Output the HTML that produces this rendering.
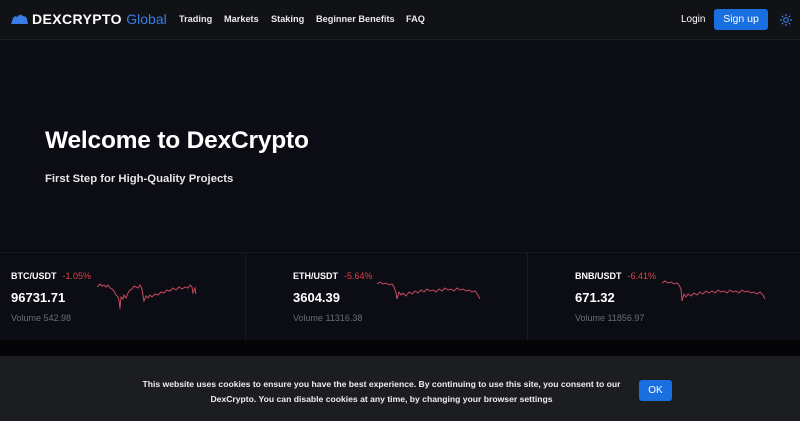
<!DOCTYPE html>
<html><head><meta charset="utf-8"><style>
*{margin:0;padding:0;box-sizing:border-box}
body{width:800px;height:421px;overflow:hidden;background:#0b0c14;font-family:"Liberation Sans",sans-serif;color:#fff;position:relative}
.hdr{position:absolute;left:0;top:0;width:800px;height:40px;background:#111215;border-bottom:1px solid #1e2026}
.logo{position:absolute;left:11px;top:11px;font-size:14px;font-weight:bold;letter-spacing:0.4px}
.logo .g{color:#3a7be8;font-weight:normal;letter-spacing:0}
.nav{position:absolute;top:14px;font-size:9.2px;font-weight:bold;color:#e8e8e8}
.btn{position:absolute;left:714px;top:9px;width:54px;height:21px;background:#1a6fe0;border-radius:3px;font-size:10.5px;text-align:center;line-height:21px}
h1{position:absolute;left:45px;top:127px;font-size:24.5px;font-weight:bold;letter-spacing:-0.2px}
.sub{position:absolute;left:45px;top:173px;font-size:11.3px;font-weight:bold;color:#e6e6e6}
.row{position:absolute;left:0;top:252px;width:800px;height:88px;border-top:1px solid #15171f}
.sep{position:absolute;top:0;width:1px;height:88px;background:#181a22}
.pair{position:absolute;top:18px;font-size:9px;font-weight:bold}
.pair span{color:#e0424c;font-weight:normal;margin-left:6px}
.price{position:absolute;top:37px;font-size:13px;font-weight:bold}
.vol{position:absolute;top:60px;font-size:9px;color:#6c6e76}
.dark{position:absolute;left:0;top:340px;width:800px;height:16px;background:#050507}
.ck{position:absolute;left:0;top:356px;width:800px;height:65px;background:#1c1d21}
.ct{position:absolute;left:120px;top:21px;width:523px;text-align:center;font-size:8.6px;line-height:15px;font-weight:bold;color:#eee}
.ok{position:absolute;left:639px;top:24px;width:33px;height:21px;background:#1a6fe0;border-radius:3px;font-size:10px;text-align:center;line-height:21px}
</style></head><body>
<div class="hdr">
<svg style="position:absolute;left:11px;top:14px" width="17" height="10" viewBox="0 0 17 10"><path d="M0 10 L2 4 Q4 1 6 3 Q9 -1 12 2 Q15 2 16 5 L17 10Z" fill="#3a7be8"/></svg>
<div class="logo" style="left:32px">DEXCRYPTO <span class="g">Global</span></div>
<div class="nav" style="left:179px">Trading</div>
<div class="nav" style="left:224px">Markets</div>
<div class="nav" style="left:271px">Staking</div>
<div class="nav" style="left:316px">Beginner Benefits</div>
<div class="nav" style="left:406px">FAQ</div>
<div class="nav" style="left:681px;font-weight:normal;color:#fff;font-size:10px">Login</div>
<div class="btn">Sign up</div>
<svg style="position:absolute;left:780px;top:14px" width="12" height="12" viewBox="0 0 12 12" stroke="#3a7be8" stroke-width="1.2" fill="none"><circle cx="6" cy="6" r="2.3"/><path d="M6 0v2M6 10v2M0 6h2M10 6h2M1.8 1.8l1.4 1.4M8.8 8.8l1.4 1.4M1.8 10.2l1.4-1.4M8.8 3.2l1.4-1.4"/></svg>
</div>
<h1>Welcome to DexCrypto</h1>
<div class="sub">First Step for High-Quality Projects</div>
<div class="row">
<div class="sep" style="left:245px"></div><div class="sep" style="left:527px"></div>
<div class="pair" style="left:11px">BTC/USDT<span>-1.05%</span></div>
<div class="price" style="left:11px">96731.71</div>
<div class="vol" style="left:11px">Volume 542.98</div>
<svg style="position:absolute;left:97px;top:28px" width="104" height="30" viewBox="0 0 104 30" fill="none" stroke="#c84a5e" stroke-width="1"><polyline points="0,6 3,3 5,5 7,4 9,6 11,4 13,7 15,8 17,10 19,14 21,16 22,19 23,28 24,16 26,18 27,14 29,17 31,12 33,9 35,8 37,5 39,6 41,7 43,4 45,8 46,15 47,20 49,15 51,17 53,14 55,16 58,13 61,14 64,11 67,12 70,9 73,10 76,7 79,9 82,6 85,8 88,6 91,7 93,4 95,6 96,12 98,7 99,13"/></svg>
<div class="pair" style="left:293px">ETH/USDT<span>-5.64%</span></div>
<div class="price" style="left:293px">3604.39</div>
<div class="vol" style="left:293px">Volume 11316.38</div>
<svg style="position:absolute;left:377px;top:26px" width="106" height="30" viewBox="0 0 106 30" fill="none" stroke="#c84a5e" stroke-width="1"><polyline points="0,5 3,3 6,5 9,4 12,6 15,5 17,8 19,14 20,20 22,13 24,16 26,14 29,17 32,13 35,15 38,12 41,14 44,11 47,13 50,10 53,12 56,11 59,13 62,10 65,12 68,9 71,11 74,10 77,12 80,9 83,11 86,10 89,12 92,11 95,13 98,12 101,16 103,20"/></svg>
<div class="pair" style="left:575px">BNB/USDT<span>-6.41%</span></div>
<div class="price" style="left:575px">671.32</div>
<div class="vol" style="left:575px">Volume 11856.97</div>
<svg style="position:absolute;left:662px;top:26px" width="106" height="30" viewBox="0 0 106 30" fill="none" stroke="#c84a5e" stroke-width="1"><polyline points="0,4 3,2 6,4 9,3 12,5 15,4 17,6 19,10 20,22 22,15 24,18 26,15 29,17 32,14 35,16 38,13 41,15 44,12 47,14 50,12 53,14 56,11 59,13 62,12 65,14 68,11 71,13 74,12 77,14 80,11 83,13 86,12 89,14 92,13 95,15 98,13 101,16 103,20"/></svg>
</div>
<div class="dark"></div>
<div class="ck">
<div class="ct">This website uses cookies to ensure you have the best experience. By continuing to use this site, you consent to our DexCrypto. You can disable cookies at any time, by changing your browser settings</div>
<div class="ok">OK</div>
</div>
</body></html>
